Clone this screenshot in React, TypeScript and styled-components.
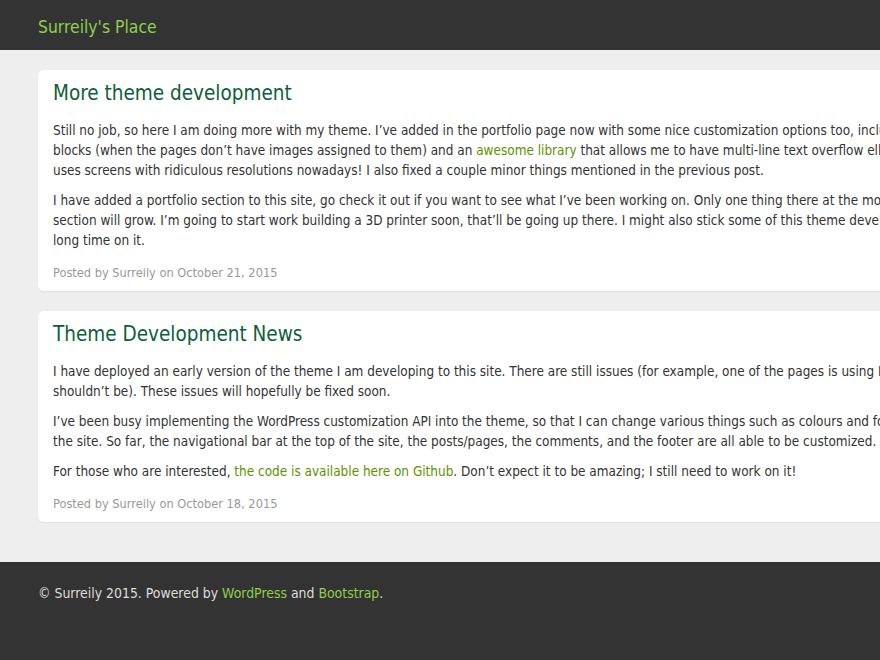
import React from "react";
import styled, { createGlobalStyle } from "styled-components";

const Global = createGlobalStyle`
  html, body {
    margin: 0;
    padding: 0;
    background: #eeeeee;
    overflow-x: hidden;
  }
  body {
    font-family: "DejaVu Sans", Tahoma, sans-serif;
    font-stretch: condensed;
    font-size: 13.45px;
    line-height: 20px;
    color: #333333;
  }
`;

const Page = styled.div`
  display: flex;
  flex-direction: column;
  min-height: 660px;
  width: 1200px;
`;

const NavBar = styled.header`
  height: 50px;
  background: #333333;
  display: flex;
  align-items: center;
  padding: 0 38px;
`;

const Brand = styled.a`
  color: #8fcf4c;
  font-size: 17.4px;
  text-decoration: none;
  padding-top: 4px;
`;

const Main = styled.main`
  padding: 20px 38px 40px;
  display: flex;
  flex-direction: column;
  gap: 20px;
`;

const Card = styled.article`
  background: #ffffff;
  border-radius: 6px;
  box-shadow: 0 1px 2px rgba(0, 0, 0, 0.06);
  padding: 11px 15px 8px;
  width: 1100px;
`;

const Title = styled.h2`
  margin: 0 0 16px;
  font-size: 20.5px;
  line-height: 24px;
  font-weight: normal;
  color: #0d5e3b;
`;

const Para = styled.p`
  margin: 0 0 10px;
  white-space: nowrap;
`;

const Link = styled.a<{ $light?: boolean }>`
  color: ${(p) => (p.$light ? "#8fcf4c" : "#5c9400")};
  text-decoration: none;
`;

const Meta = styled.div`
  margin-top: 12px;
  font-size: 12.7px;
  line-height: 20px;
  color: #999999;
`;

const Footer = styled.footer`
  background: #333333;
  color: #dddddd;
  font-size: 13.9px;
  padding: 21px 38px 0;
  flex: 1;
`;

export default function App() {
  return (
    <>
      <Global />
      <Page>
        <NavBar>
          <Brand href="#">Surreily's Place</Brand>
        </NavBar>
        <Main>
          <Card>
            <Title>More theme development</Title>
            <Para>
              Still no job, so here I am doing more with my theme. I’ve added in the portfolio page now with some nice customization options too, including placeholder colours for the
              <br />
              blocks (when the pages don’t have images assigned to them) and an <Link href="#">awesome library</Link> that allows me to have multi-line text overflow ellipsis, which is great since everyone
              <br />
              uses screens with ridiculous resolutions nowadays! I also fixed a couple minor things mentioned in the previous post.
            </Para>
            <Para>
              I have added a portfolio section to this site, go check it out if you want to see what I’ve been working on. Only one thing there at the moment, but hopefully the
              <br />
              section will grow. I’m going to start work building a 3D printer soon, that’ll be going up there. I might also stick some of this theme development up there, since I spent a
              <br />
              long time on it.
            </Para>
            <Meta>Posted by Surreily on October 21, 2015</Meta>
          </Card>
          <Card>
            <Title>Theme Development News</Title>
            <Para>
              I have deployed an early version of the theme I am developing to this site. There are still issues (for example, one of the pages is using Bootstrap styles when it
              <br />
              shouldn’t be). These issues will hopefully be fixed soon.
            </Para>
            <Para>
              I’ve been busy implementing the WordPress customization API into the theme, so that I can change various things such as colours and fonts without editing
              <br />
              the site. So far, the navigational bar at the top of the site, the posts/pages, the comments, and the footer are all able to be customized.
            </Para>
            <Para>
              For those who are interested, <Link href="#">the code is available here on Github</Link>. Don’t expect it to be amazing; I still need to work on it!
            </Para>
            <Meta>Posted by Surreily on October 18, 2015</Meta>
          </Card>
        </Main>
        <Footer>
          © Surreily 2015. Powered by <Link $light href="#">WordPress</Link> and <Link $light href="#">Bootstrap</Link>.
        </Footer>
      </Page>
    </>
  );
}
